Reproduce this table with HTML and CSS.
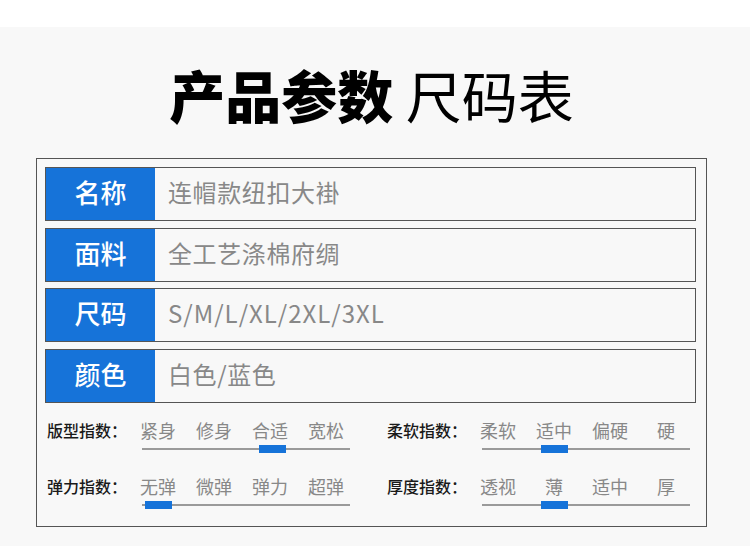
FILE: index.html
```html
<!DOCTYPE html>
<html lang="zh">
<head>
<meta charset="utf-8">
<link rel="stylesheet" href="styles.css">
</head>
<body>
<div class="topbar"></div>
<h1 class="title"><span class="t-bold">产品参数</span> <span class="t-light">尺码表</span></h1>
<div class="box">
  <div class="rows">
    <div class="row"><div class="label">名称</div><div class="value">连帽款纽扣大褂</div></div>
    <div class="row"><div class="label">面料</div><div class="value">全工艺涤棉府绸</div></div>
    <div class="row"><div class="label">尺码</div><div class="value value-latin">S/M/L/XL/2XL/3XL</div></div>
    <div class="row"><div class="label">颜色</div><div class="value">白色/蓝色</div></div>
  </div>
  <div class="indices">
    <div class="idx">
      <div class="idx-label">版型指数：</div>
      <div class="scale">
        <div class="opts"><span class="opt">紧身</span><span class="opt">修身</span><span class="opt">合适</span><span class="opt">宽松</span></div>
        <div class="track"><div class="mark" style="left:117px"></div></div>
      </div>
    </div>
    <div class="idx">
      <div class="idx-label">柔软指数：</div>
      <div class="scale">
        <div class="opts"><span class="opt">柔软</span><span class="opt">适中</span><span class="opt">偏硬</span><span class="opt">硬</span></div>
        <div class="track"><div class="mark" style="left:59px"></div></div>
      </div>
    </div>
    <div class="idx">
      <div class="idx-label">弹力指数：</div>
      <div class="scale">
        <div class="opts"><span class="opt">无弹</span><span class="opt">微弹</span><span class="opt">弹力</span><span class="opt">超弹</span></div>
        <div class="track"><div class="mark" style="left:3px"></div></div>
      </div>
    </div>
    <div class="idx">
      <div class="idx-label">厚度指数：</div>
      <div class="scale">
        <div class="opts"><span class="opt">透视</span><span class="opt">薄</span><span class="opt">适中</span><span class="opt">厚</span></div>
        <div class="track"><div class="mark" style="left:59px"></div></div>
      </div>
    </div>
  </div>
</div>
</body>
</html>
```
FILE: styles.css
```css
* { box-sizing: border-box; }
html, body { margin: 0; padding: 0; }
body {
  background: #f8f8f8;
  font-family: "Noto Sans CJK SC", "Noto Sans", sans-serif;
  width: 750px;
  height: 546px;
  overflow: hidden;
}
.topbar { height: 27px; background: #ffffff; }
.title {
  margin: 39px 0 0 0;
  padding-right: 7px;
  height: 56px;
  font-size: 56px;
  line-height: 56px;
  text-align: center;
  color: #000;
  white-space: nowrap;
}
.t-bold { font-weight: 900; }
.t-light { font-weight: 400; }
.box {
  margin: 36px 0 0 36px;
  width: 671px;
  height: 369px;
  border: 1px solid #555;
  padding: 8px 10px 0 8px;
}
.rows { display: flex; flex-direction: column; gap: 6.5px; }
.row {
  display: flex;
  width: 651px;
  height: 54px;
  border: 1px solid #555;
}
.label {
  width: 109px;
  background: #1673d9;
  color: #fff;
  font-size: 26px;
  font-weight: 500;
  display: flex;
  align-items: center;
  justify-content: center;
  padding-bottom: 5px;
}
.value {
  display: flex;
  align-items: center;
  padding-left: 13px;
  padding-bottom: 5px;
  font-size: 24px;
  letter-spacing: 0.6px;
  color: #888;
}
.value-latin { letter-spacing: 1px; }
.indices {
  display: grid;
  grid-template-columns: 340px 320px;
  row-gap: 24px;
  margin-top: 15.5px;
  padding-left: 2px;
}
.idx { display: flex; }
.idx-label {
  flex-shrink: 0;
  width: 93px;
  font-size: 16px;
  line-height: 24px;
  font-weight: 500;
  color: #1a1a1a;
  white-space: nowrap;
}
.scale { flex-shrink: 0; }
.opts { display: flex; }
.opt {
  width: 36px;
  margin-right: 20px;
  text-align: center;
  font-size: 18px;
  line-height: 24px;
  color: #888;
}
.track {
  position: relative;
  margin: 6px 0 0 2px;
  width: 208px;
  height: 2px;
  background: #9a9a9a;
}
.mark {
  position: absolute;
  top: -3px;
  width: 27px;
  height: 8px;
  background: #1673d9;
}
```
